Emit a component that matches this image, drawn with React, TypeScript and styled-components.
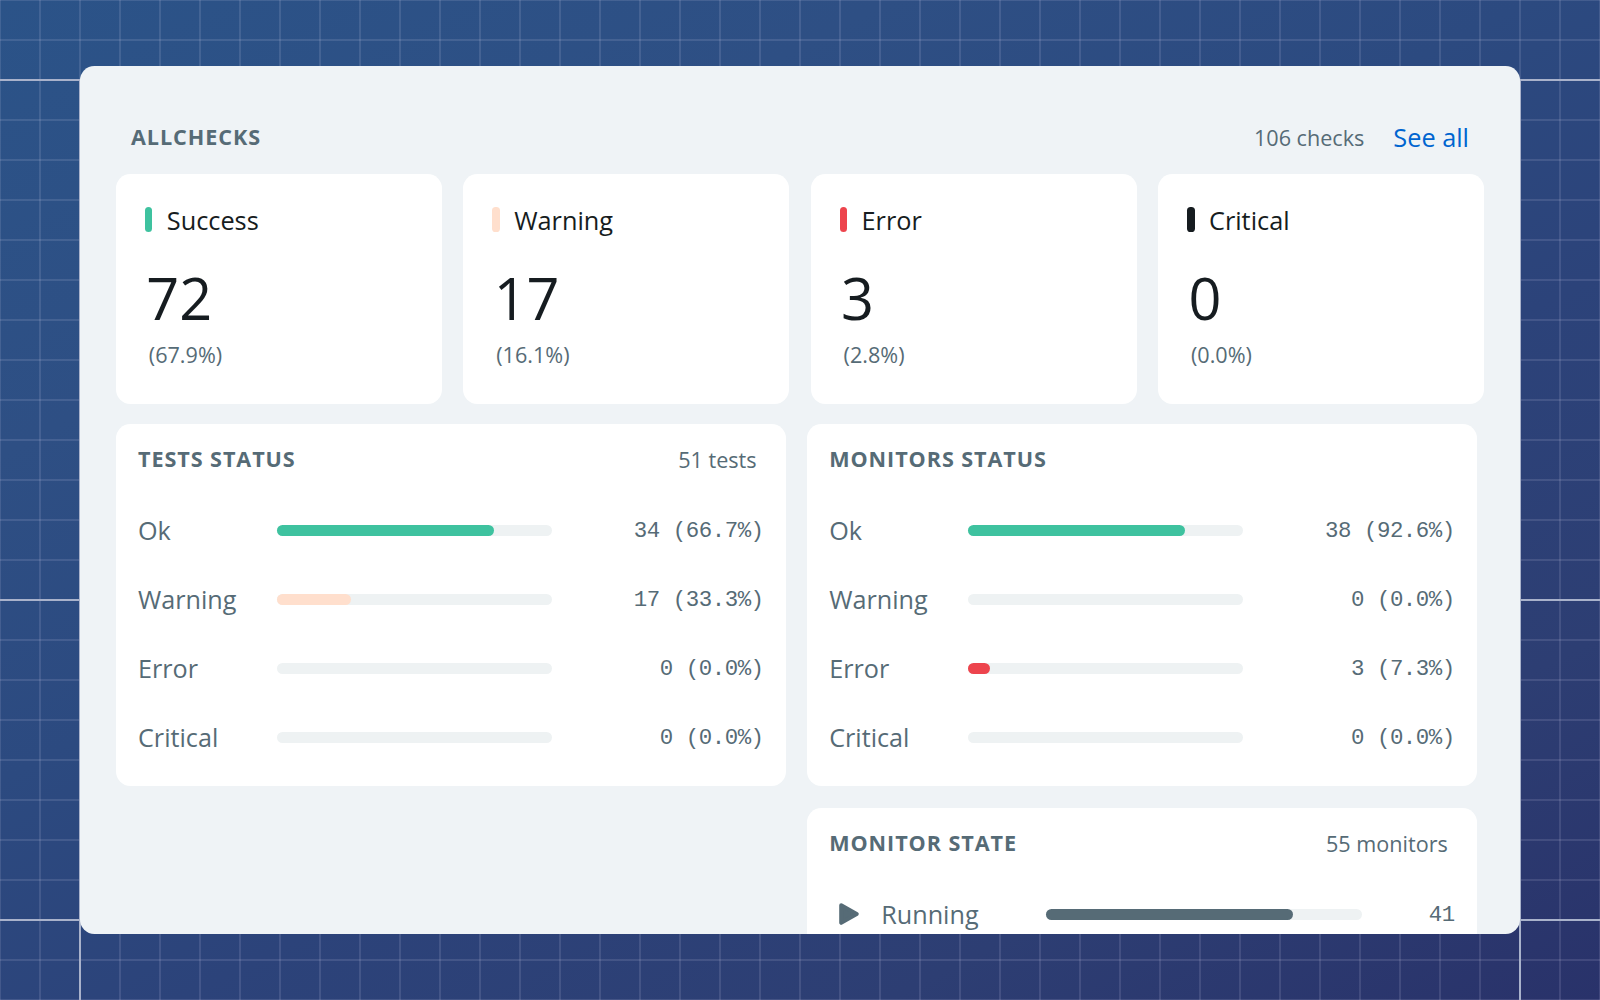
import React from 'react';
import styled, { createGlobalStyle } from 'styled-components';

const GlobalStyle = createGlobalStyle`
  * {
    box-sizing: border-box;
  }

  body {
    margin: 0;
    font-family: 'Open Sans', sans-serif;
    color: #566b76;
  }
`;

const colors = {
  slate: '#566b76',
  dark: '#161c20',
  green: '#3ec29f',
  peach: '#ffdfcd',
  red: '#ed444d',
  track: '#eef2f3',
};

const Page = styled.div`
  position: relative;
  width: 1600px;
  height: 1000px;
  padding: 66px 80px 0;
  overflow: hidden;
  background: linear-gradient(153deg, #2b5388 0%, #2e4f84 25%, #2c4a80 43%, #2c437a 60%, #2d3e73 80%, #29326a 100%);
`;

const Grid = styled.svg`
  position: absolute;
  top: 0;
  left: 0;
`;

const Panel = styled.main`
  position: relative;
  width: 1440px;
  height: 867.5px;
  padding: 50px 36px 0;
  overflow: hidden;
  border-radius: 14.4px;
  background-color: #eff3f6;
`;

const Header = styled.header`
  display: flex;
  align-items: center;
  height: 43px;
  margin-bottom: 15.3px;
  padding: 0 15px;
`;

const Title = styled.h2`
  flex: 1;
  margin: 0;
  padding-bottom: 2px;
  font-weight: 700;
  font-size: 21.6px;
  line-height: 30px;
  letter-spacing: 0.93px;
`;

const Count = styled.span`
  font-size: 21.6px;
  line-height: 30px;
`;

const SeeAll = styled.a`
  margin-left: 29px;
  padding-bottom: 1px;
  font-size: 25.3px;
  line-height: 36px;
  color: #0065d0;
`;

const Cards = styled.section`
  display: grid;
  grid-template-columns: repeat(4, 325.8px);
  column-gap: 21.6px;
  margin-bottom: 20px;
`;

const Card = styled.article`
  height: 229.7px;
  padding: 27.5px 28.8px;
  border-radius: 14.4px;
  background-color: white;
`;

const CardLabel = styled.div`
  display: flex;
  align-items: center;
  height: 36px;
  font-size: 25.3px;
  color: ${colors.dark};
`;

const Marker = styled.span<{ $color: string }>`
  width: 7.6px;
  height: 25px;
  margin-right: 14.4px;
  border-radius: 3.6px;
  background-color: ${props => props.$color};
`;

const Value = styled.div`
  margin: 20.5px 0 0 1.5px;
  font-size: 57.6px;
  line-height: 79px;
  color: ${colors.dark};
`;

const Percent = styled.div`
  margin: 1px 0 0 4px;
  font-size: 21.6px;
  line-height: 34px;
`;

const Columns = styled.section`
  display: flex;
  align-items: flex-start;
  gap: 21.6px;
`;

const Column = styled.div`
  display: flex;
  flex-direction: column;
  gap: 22px;
`;

const Block = styled.article`
  width: 669.6px;
  height: 362px;
  padding: 20px 22px 0;
  border-radius: 14.4px;
  background-color: white;
`;

const BlockHeader = styled.header`
  display: flex;
  align-items: center;
  height: 33px;
  margin-bottom: 19px;
  padding-right: 7px;
`;

const Row = styled.div`
  display: flex;
  align-items: center;
  height: 68.8px;
  font-size: 25.2px;
`;

const Name = styled.span<{ $width: number }>`
  width: ${props => props.$width}px;
`;

const Track = styled.div<{ $width: number }>`
  width: ${props => props.$width}px;
  height: 11px;
  margin-top: 1px;
  border-radius: 6px;
  background-color: ${colors.track};
`;

const Fill = styled.div<{ $color: string }>`
  height: 100%;
  border-radius: 6px;
  background-color: ${props => props.$color};
`;

const Amount = styled.span`
  flex: 1;
  padding-top: 2px;
  font-family: 'Liberation Mono', monospace;
  font-size: 22.4px;
  letter-spacing: -0.46px;
  text-align: right;
  white-space: pre;
`;

const PlayIcon = styled.svg`
  flex: none;
  width: 22px;
  height: 24px;
  margin: 0 22px 0 8px;
`;

const cards = [
  { label: 'Success', value: 72, percent: '67.9%', color: colors.green },
  { label: 'Warning', value: 17, percent: '16.1%', color: colors.peach },
  { label: 'Error', value: 3, percent: '2.8%', color: colors.red },
  { label: 'Critical', value: 0, percent: '0.0%', color: colors.dark },
];

interface Status {
  label: string;
  amount: string;
  bar: number;
  color: string;
}

const tests: Status[] = [
  { label: 'Ok', amount: '34 (66.7%)', bar: 79, color: colors.green },
  { label: 'Warning', amount: '17 (33.3%)', bar: 27, color: colors.peach },
  { label: 'Error', amount: '0 (0.0%)', bar: 0, color: colors.red },
  { label: 'Critical', amount: '0 (0.0%)', bar: 0, color: colors.dark },
];

const monitors: Status[] = [
  { label: 'Ok', amount: '38 (92.6%)', bar: 79, color: colors.green },
  { label: 'Warning', amount: '0 (0.0%)', bar: 0, color: colors.peach },
  { label: 'Error', amount: '3 (7.3%)', bar: 8, color: colors.red },
  { label: 'Critical', amount: '0 (0.0%)', bar: 0, color: colors.dark },
];

const range = (length: number) => Array.from({ length }, (_, i) => i * 40);

const Blueprint = () => (
  <Grid width='1600' height='1000' fill='none' strokeWidth='2'>
    <g stroke='#f0eaff' strokeOpacity='0.12'>
      {range(41).map(x => <path key={x} d={`M${x} 0V1000`}/>)}
      {range(26).map(y => <path key={y} d={`M0 ${y}H1600`}/>)}
    </g>
    <path d='M0 80H1600M0 600H1600M0 920H1600M80 80V1000M1520 80V1000' stroke='#a9b2cb'/>
  </Grid>
);

const StatusBlock = ({ title, count, rows }: { title: string; count?: string; rows: Status[] }) => (
  <Block>
    <BlockHeader>
      <Title>{title}</Title>
      {count && <Count>{count}</Count>}
    </BlockHeader>
    {rows.map(row => (
      <Row key={row.label}>
        <Name $width={139}>{row.label}</Name>
        <Track $width={275}>
          <Fill $color={row.color} style={{ width: `${row.bar}%` }}/>
        </Track>
        <Amount>{row.amount}</Amount>
      </Row>
    ))}
  </Block>
);

const App = () => {
  return(
    <>
      <GlobalStyle/>
      <Page>
        <Blueprint/>
        <Panel>
          <Header>
            <Title>ALLCHECKS</Title>
            <Count>106 checks</Count>
            <SeeAll>See all</SeeAll>
          </Header>
          <Cards>
            {cards.map(card => (
              <Card key={card.label}>
                <CardLabel><Marker $color={card.color}/>{card.label}</CardLabel>
                <Value>{card.value}</Value>
                <Percent>({card.percent})</Percent>
              </Card>
            ))}
          </Cards>
          <Columns>
            <StatusBlock title='TESTS STATUS' count='51 tests' rows={tests}/>
            <Column>
              <StatusBlock title='MONITORS STATUS' rows={monitors}/>
              <Block>
                <BlockHeader>
                  <Title>MONITOR STATE</Title>
                  <Count>55 monitors</Count>
                </BlockHeader>
                <Row>
                  <PlayIcon viewBox='0 0 22 24'>
                    <path
                      d='M4.2 3.2L19.7 12L4.2 20.8Z'
                      fill={colors.slate}
                      stroke={colors.slate}
                      strokeWidth='4'
                      strokeLinejoin='round'/>
                  </PlayIcon>
                  <Name $width={165}>Running</Name>
                  <Track $width={316}>
                    <Fill $color={colors.slate} style={{ width: '78%' }}/>
                  </Track>
                  <Amount>41</Amount>
                </Row>
              </Block>
            </Column>
          </Columns>
        </Panel>
      </Page>
    </>
  );
};

export default App;
